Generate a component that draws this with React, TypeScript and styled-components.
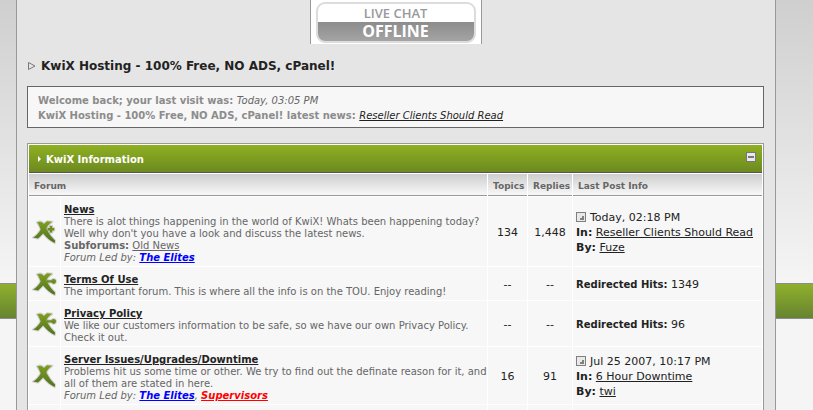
import React from "react";
import styled, { createGlobalStyle, css } from "styled-components";

const Global = createGlobalStyle`
  * { box-sizing: border-box; }
  body { margin: 0; background: #f5f5f5; font-family: Verdana, "DejaVu Sans", sans-serif; font-size: 11px; color: #222; }
`;

const Page = styled.div`
  height: 100vh;
  overflow: hidden;
  padding: 0 37px 0 16px;
  background:
    linear-gradient(#8fb02c, #668430) 0 284px / 100% 34px no-repeat,
    linear-gradient(#8c8c8c, #8c8c8c) 0 283px / 100% 36px no-repeat,
    linear-gradient(#cfcfcf, #f5f5f5) 0 0 / 100% 283px no-repeat,
    #f5f5f5;
`;

const Panel = styled.main`
  min-height: 100%;
  padding: 0 11px 0 10px;
  background: #e5e5e5;
  border: solid #999;
  border-width: 0 1px;
`;

const ChatLink = styled.a`
  display: block;
  width: 172px;
  height: 44px;
  margin: 0 auto;
  padding: 2px 5px;
  background: #fff;
  border: solid #999;
  border-width: 0 1px;
  text-decoration: none;
  text-align: center;
`;

const ChatFace = styled.span`
  display: flex;
  flex-direction: column;
  height: 41px;
  overflow: hidden;
  border: 2px solid #dcdcdc;
  border-radius: 9px;
  font-family: "Open Sans", sans-serif;
`;

const ChatTitle = styled.span`
  height: 18px;
  line-height: 18px;
  font-size: 13px;
  font-weight: 600;
  color: #999;
`;

const ChatState = styled.span`
  flex: 1;
  line-height: 19px;
  font-size: 16px;
  font-weight: 700;
  color: #fff;
  background: linear-gradient(#8c8c8c, #a4a4a4);
`;

const Heading = styled.h1`
  display: flex;
  align-items: center;
  gap: 5px;
  height: 16px;
  margin: 14px 0 12px;
  font-size: 12px;
  line-height: 16px;
`;

const Welcome = styled.section`
  padding: 6px 10px 4px;
  border: 1px solid #666;
  background: #f7f7f7;
  color: #8c8c8c;
  font-size: 10px;
  font-weight: 700;
  line-height: 15px;
`;

const Visit = styled.em`
  font-weight: 400;
  color: #666;
`;

const Link = styled.a<{ $tone?: string; $strong?: boolean }>`
  color: ${(p) => p.$tone ?? "#222"};
  font-weight: ${(p) => (p.$strong ? 700 : 400)};
  text-decoration: underline;
  text-underline-offset: 1px;
`;

const Board = styled.section`
  margin-top: 15px;
  padding: 1px 1px 0;
  border: 1px solid #999;
  background: #fff;
`;

const BoardBar = styled.header`
  display: flex;
  align-items: center;
  gap: 5px;
  height: 28px;
  padding: 0 6px 0 9px;
  border-bottom: 1px solid #555;
  background: linear-gradient(#8fb022, #6c8a20);
`;

const BoardTitle = styled.h2`
  flex: 1;
  margin: 2px 0 0;
  font-size: 10px;
  line-height: 14px;
  color: #fff;
`;

const Collapse = styled.button`
  width: 10px;
  height: 10px;
  margin-bottom: 4px;
  padding: 0;
  border: 1px solid #777;
  background: linear-gradient(#777, #777) center / 6px 2px no-repeat #e9e9e9;
`;

const Table = styled.table`
  width: 100%;
  table-layout: fixed;
  border-collapse: separate;
  border-spacing: 0;
`;

const Col = styled.col<{ $w?: number }>`
  ${(p) => p.$w && css`width: ${p.$w}px;`}
`;

const Head = styled.th`
  height: 23px;
  padding: 1px 0 0 5px;
  border: solid #fff;
  border-width: 1px 0 0 1px;
  background: linear-gradient(#999, #999) 0 100% / 100% 1px no-repeat, linear-gradient(#cecece, #fafafa);
  font-size: 9px;
  text-align: left;
  white-space: nowrap;
  color: #666;
  &:first-child { border-left: 0; }
`;

const Cell = styled.td<{ $center?: boolean }>`
  padding: 3px 0 2px ${(p) => (p.$center ? 0 : 3)}px;
  border: solid #fff;
  border-width: 1px 0 0 1px;
  background: #f7f7f7;
  line-height: 15px;
  text-align: ${(p) => (p.$center ? "center" : "left")};
  vertical-align: middle;
  white-space: nowrap;
  &:first-child { border-left: 0; }
`;

const ForumCell = styled.td`
  padding: 6px 3px 2px;
  border: solid #fff;
  border-width: 1px 0 0 1px;
  background: #f7f7f7;
  color: #666;
  font-size: 10px;
  line-height: 12px;
  white-space: nowrap;
`;

const ForumName = styled.h3`
  margin: 0;
  font-size: 10px;
  line-height: 13px;
`;

const HitsLabel = styled.b`
  font-size: 10px;
`;

const Spacer = styled.tr`
  height: 34px;
`;

const PostIcon = styled.svg`
  display: inline-block;
  margin-right: 4px;
  vertical-align: -1px;
`;

const MarkSvg = styled.svg`
  display: block;
  margin: 0 auto;
`;

type Kind = "new" | "redirect" | "read";

function Mark({ kind }: { kind: Kind }) {
  const shape = (
    <>
      <path d="M4 1.5C7 0 9.6 0.8 11 3.4L13.8 8.4C16 12.6 18.8 16.4 22 19.4L21.8 22C17.4 20 13.2 16.4 10 12.2L7 6.8C6.2 4.6 5.4 2.8 4 1.5Z" />
      <path d="M19.2 0.8L14 0.2C11.4 2 9.4 5 7.800 8.400C5.800 11.800 3 14.800 0 16.600L5 17.600C8.200 15.200 10.400 12.200 12.400 8.600C14.200 5.200 16.400 2.600 19.200 0.800Z" />
      {kind === "new" && <path d="M16.800 5h2.400v2h2v2.400h-2v2h-2.400v-2h-2V7h2Z" />}
      {kind === "redirect" && <path d="M13.500 7.200h5a2.400 2.400 0 1 1 0 2.200h-5Z" />}
    </>
  );
  return (
    <MarkSvg width="26" height="26" viewBox="-1 -2 26 26" aria-hidden="true">
      <defs>
        <linearGradient id={"leaf-" + kind} x1="0" y1="0" x2="0" y2="22" gradientUnits="userSpaceOnUse">
          <stop offset="0" stopColor="#7fa020" />
          <stop offset="1" stopColor="#4f701e" />
        </linearGradient>
      </defs>
      <g fill="none" stroke="#666" strokeOpacity="0.25" strokeWidth="2" strokeLinejoin="round">{shape}</g>
      <g fill={`url(#leaf-${kind})`}>{shape}</g>
    </MarkSvg>
  );
}

function GoTo() {
  return (
    <PostIcon width="10" height="10" viewBox="0 0 10 10" aria-hidden="true">
      <rect x="0.5" y="0.5" width="9" height="9" fill="#e9e9e9" stroke="#808080" />
      <path d="M6 4h2v4H4V6h2Z" fill="#808080" />
    </PostIcon>
  );
}

type Forum = {
  kind: Kind;
  name: string;
  text: React.ReactNode;
  sub?: string;
  led?: [string, string][];
  topics: string;
  replies: string;
  hits?: string;
  last?: { when: string; topic: string; by: string };
};

const forums: Forum[] = [
  {
    kind: "new",
    name: "News",
    text: (
      <>
        There is alot things happening in the world of KwiX! Whats been happening today?
        <br />
        Well why don't you have a look and discuss the latest news.
      </>
    ),
    sub: "Old News",
    led: [["The Elites", "#00f"]],
    topics: "134",
    replies: "1,448",
    last: { when: "Today, 02:18 PM", topic: "Reseller Clients Should Read", by: "Fuze" },
  },
  {
    kind: "redirect",
    name: "Terms Of Use",
    text: "The important forum. This is where all the info is on the TOU. Enjoy reading!",
    topics: "--",
    replies: "--",
    hits: "1349",
  },
  {
    kind: "redirect",
    name: "Privacy Policy",
    text: (
      <>
        We like our customers information to be safe, so we have our own Privacy Policy.
        <br />
        Check it out.
      </>
    ),
    topics: "--",
    replies: "--",
    hits: "96",
  },
  {
    kind: "read",
    name: "Server Issues/Upgrades/Downtime",
    text: (
      <>
        Problems hit us some time or other. We try to find out the definate reason for it, and
        <br />
        all of them are stated in here.
      </>
    ),
    led: [["The Elites", "#00f"], ["Supervisors", "#f00"]],
    topics: "16",
    replies: "91",
    last: { when: "Jul 25 2007, 10:17 PM", topic: "6 Hour Downtime", by: "twi" },
  },
];

function ForumRow({ f }: { f: Forum }) {
  return (
    <tr>
      <Cell $center><Mark kind={f.kind} /></Cell>
      <ForumCell>
        <ForumName><Link href="#" $strong>{f.name}</Link></ForumName>
        <div>{f.text}</div>
        {f.sub && <div><b>Subforums:</b> <Link href="#" $tone="#666">{f.sub}</Link></div>}
        {f.led && (
          <div>
            <em>
              Forum Led by:{" "}
              {f.led.map(([who, tone], i) => (
                <React.Fragment key={who}>
                  {i > 0 && ", "}
                  <Link href="#" $strong $tone={tone}>{who}</Link>
                </React.Fragment>
              ))}
            </em>
          </div>
        )}
      </ForumCell>
      <Cell $center>{f.topics}</Cell>
      <Cell $center>{f.replies}</Cell>
      <Cell>
        {f.hits && <><HitsLabel>Redirected Hits:</HitsLabel> {f.hits}</>}
        {f.last && (
          <>
            <div><GoTo />{f.last.when}</div>
            <div><b>In:</b> <Link href="#">{f.last.topic}</Link></div>
            <div><b>By:</b> <Link href="#">{f.last.by}</Link></div>
          </>
        )}
      </Cell>
    </tr>
  );
}

export default function App() {
  return (
    <Page>
      <Global />
      <Panel>
        <ChatLink href="#">
          <ChatFace>
            <ChatTitle>LIVE CHAT</ChatTitle>
            <ChatState>OFFLINE</ChatState>
          </ChatFace>
        </ChatLink>
        <Heading>
          <svg width="9" height="8" viewBox="0 0 9 8" aria-hidden="true">
            <path d="M1.5 0.5v7L8 4Z" fill="none" stroke="#777" />
          </svg>
          KwiX Hosting - 100% Free, NO ADS, cPanel!
        </Heading>
        <Welcome>
          <div>Welcome back; your last visit was: <Visit>Today, 03:05 PM</Visit></div>
          <div>
            KwiX Hosting - 100% Free, NO ADS, cPanel! latest news:{" "}
            <em><Link href="#">Reseller Clients Should Read</Link></em>
          </div>
        </Welcome>
        <Board>
          <BoardBar>
            <svg width="3" height="6" viewBox="0 0 3 6" aria-hidden="true">
              <path d="M0 0L3 3L0 6Z" fill="#fff" />
            </svg>
            <BoardTitle>KwiX Information</BoardTitle>
            <Collapse type="button" aria-label="Collapse KwiX Information" />
          </BoardBar>
          <Table>
            <colgroup>
              <Col $w={31} /><Col /><Col $w={40} /><Col $w={45} /><Col $w={190} />
            </colgroup>
            <thead>
              <tr>
                <Head colSpan={2}>Forum</Head>
                <Head>Topics</Head>
                <Head>Replies</Head>
                <Head>Last Post Info</Head>
              </tr>
            </thead>
            <tbody>
              {forums.map((f) => <ForumRow key={f.name} f={f} />)}
              <Spacer>
                <Cell /><ForumCell /><Cell /><Cell /><Cell />
              </Spacer>
            </tbody>
          </Table>
        </Board>
      </Panel>
    </Page>
  );
}
